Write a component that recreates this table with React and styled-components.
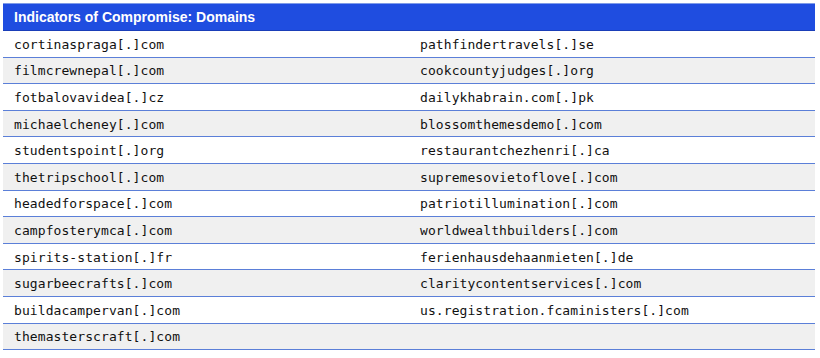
import styled, { createGlobalStyle } from "styled-components";

const GlobalStyle = createGlobalStyle`
    body {
        margin: 0;
        background: #ffffff;
    }
`;

const domains = [
    ["cortinaspraga[.]com", "pathfindertravels[.]se"],
    ["filmcrewnepal[.]com", "cookcountyjudges[.]org"],
    ["fotbalovavidea[.]cz", "dailykhabrain.com[.]pk"],
    ["michaelcheney[.]com", "blossomthemesdemo[.]com"],
    ["studentspoint[.]org", "restaurantchezhenri[.]ca"],
    ["thetripschool[.]com", "supremesovietoflove[.]com"],
    ["headedforspace[.]com", "patriotillumination[.]com"],
    ["campfosterymca[.]com", "worldwealthbuilders[.]com"],
    ["spirits-station[.]fr", "ferienhausdehaanmieten[.]de"],
    ["sugarbeecrafts[.]com", "claritycontentservices[.]com"],
    ["buildacampervan[.]com", "us.registration.fcaministers[.]com"],
    ["themasterscraft[.]com", ""],
];

export default function App(){
    return (
        <Page>
            <GlobalStyle/>
            <Table>
                <Header>Indicators of Compromise: Domains</Header>
                {domains.map((pair, i) => (
                    <Row key={i} $shaded={i % 2 === 1}>
                        <Cell>{pair[0]}</Cell>
                        <Cell>{pair[1]}</Cell>
                    </Row>
                ))}
            </Table>
        </Page>
    );
}

const Page = styled.div`
    padding: 3px 5px 0 3px;
`;

const Table = styled.div`
    width: 812px;
    display: flex;
    flex-direction: column;
`;

const Header = styled.div`
    height: 28px;
    box-sizing: border-box;
    background-color: #1f4de0;
    border-top: 1px solid #7f9be8;
    border-bottom: 1px solid #1a3eb8;
    color: #ffffff;
    font-family: "Liberation Sans", Arial, sans-serif;
    font-weight: bold;
    font-size: 14px;
    padding: 0 11px 1px;
    display: flex;
    align-items: center;
`;

const Row = styled.div`
    height: 26.6px;
    box-sizing: border-box;
    display: grid;
    grid-template-columns: 406px 406px;
    align-items: center;
    background-color: ${p => p.$shaded ? "#f0f0f0" : "#ffffff"};
    border-bottom: 1px solid #5b7fd8;
`;

const Cell = styled.div`
    padding-left: 11px;
    padding-top: 1px;
    font-family: "DejaVu Sans Mono", "Liberation Mono", monospace;
    font-size: 13px;
    letter-spacing: 0.08px;
    color: #111111;
    white-space: nowrap;
`;
